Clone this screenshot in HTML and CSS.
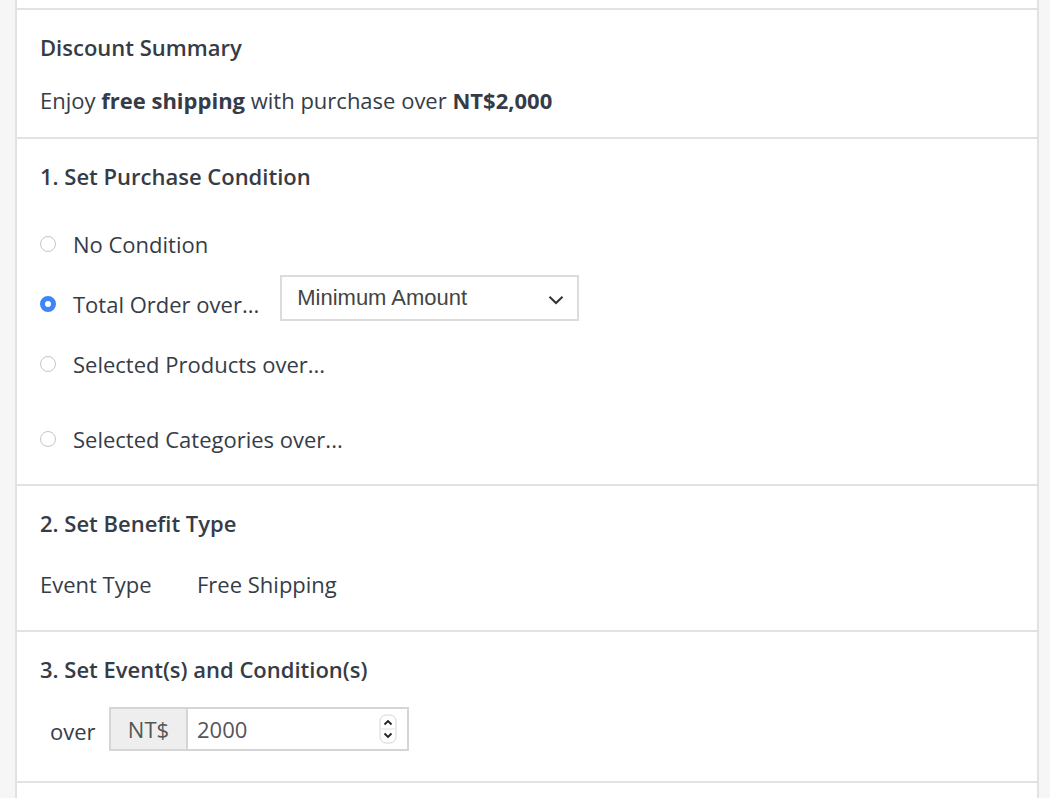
FILE: index.html
```html
<!DOCTYPE html>
<html lang="en">
<head>
<meta charset="utf-8">
<title>Discount</title>
<link rel="stylesheet" href="styles.css">
</head>
<body>
<div class="panel">
  <div class="section top-stub"></div>
  <div class="section">
    <div class="heading">Discount Summary</div>
    <div class="summary">Enjoy <b>free shipping</b> with purchase over <b>NT$2,000</b></div>
  </div>
  <div class="section cond">
    <div class="heading">1. Set Purchase Condition</div>
    <div class="radios">
      <div class="row r1"><span class="radio"></span><span class="label">No Condition</span></div>
      <div class="row r2"><span class="radio checked"></span><span class="label">Total Order over...</span>
        <div class="select"><span>Minimum Amount</span>
          <svg class="chev" width="16" height="10" viewBox="0 0 16 10"><path d="M1.5 1.8 L8 8 L14.5 1.8" fill="none" stroke="#333" stroke-width="2"/></svg>
        </div>
      </div>
      <div class="row r3"><span class="radio"></span><span class="label">Selected Products over...</span></div>
      <div class="row r4"><span class="radio"></span><span class="label">Selected Categories over...</span></div>
    </div>
  </div>
  <div class="section benefit">
    <div class="heading">2. Set Benefit Type</div>
    <div class="kv"><span class="k">Event Type</span><span class="v">Free Shipping</span></div>
  </div>
  <div class="section events">
    <div class="heading">3. Set Event(s) and Condition(s)</div>
    <div class="over-row">
      <span class="over">over</span>
      <div class="group">
        <span class="addon">NT$</span>
        <span class="value">2000</span>
        <svg class="spin" width="18" height="30" viewBox="0 0 18 30">
          <rect x="1" y="1" width="16" height="28" rx="6" fill="#fff" stroke="#d6d6d6"/>
          <line x1="2" y1="15" x2="16" y2="15" stroke="#e2e2e2"/>
          <path d="M5.5 10.5 L9 7 L12.5 10.5" fill="none" stroke="#222" stroke-width="1.8"/>
          <path d="M5.5 19.5 L9 23 L12.5 19.5" fill="none" stroke="#222" stroke-width="1.8"/>
        </svg>
      </div>
    </div>
  </div>
  <div class="section tail"></div>
</div>
</body>
</html>
```

FILE: styles.css
```css
html, body {
  margin: 0;
  padding: 0;
}
body {
  background: #f6f6f6;
  font-family: "Open Sans", "Liberation Sans", sans-serif;
  color: #363c47;
  font-size: 22px;
  height: 798px;
  overflow: hidden;
}
.panel {
  margin: 0 11px 0 15px;
  background: #fff;
  border-left: 2px solid #e2e2e2;
  border-right: 2px solid #e2e2e2;
  min-height: 798px;
}
.section {
  border-bottom: 2px solid #e2e2e2;
  padding: 23px 23px 23px;
}
.top-stub {
  padding: 0;
  height: 8px;
}
.tail {
  border-bottom: none;
  height: 40px;
  padding: 0;
}
.heading {
  font-weight: 600;
  line-height: 28px;
}
.summary {
  margin-top: 25px;
  line-height: 28px;
}
.summary b {
  font-weight: 700;
}
.cond {
  padding-bottom: 31px;
}
.radios {
  margin-top: 40px;
}
.row {
  display: flex;
  align-items: flex-start;
  line-height: 28px;
  height: 28px;
}
.r2 { margin-top: 32px; }
.r3 { margin-top: 32px; }
.r4 { margin-top: 47px; }
.radio {
  width: 16px;
  height: 16px;
  box-sizing: border-box;
  border: 1px solid #c6c6c6;
  border-radius: 50%;
  background: #fff;
  margin: 6px 17px 0 0;
  flex: none;
}
.radio.checked {
  border: 5px solid #3d86f6;
  background: #fff;
}
.select {
  margin: -15px 0 0 21px;
  width: 299px;
  height: 46px;
  box-sizing: border-box;
  border: 2px solid #dcdcdc;
  display: flex;
  align-items: center;
  justify-content: space-between;
  padding: 0 13px 0 15px;
  font-family: "Liberation Sans", Arial, sans-serif;
  color: #444;
  font-size: 22px;
}
.chev {
  margin-top: 4px;
}
.benefit {
  padding-bottom: 32px;
}
.kv {
  margin-top: 33px;
  line-height: 28px;
  display: flex;
}
.kv .k {
  width: 157px;
}
.events {
  padding-bottom: 30px;
}
.over-row {
  margin-top: 24px;
  display: flex;
  align-items: center;
}
.over {
  margin-left: 10px;
  width: 59px;
  padding-top: 4px;
}
.group {
  display: flex;
  align-items: center;
  width: 300px;
  height: 44px;
  box-sizing: border-box;
  border: 2px solid #d5d5d5;
  color: #555;
}
.addon {
  width: 77px;
  height: 100%;
  background: #eeeeee;
  border-right: 2px solid #d5d5d5;
  display: flex;
  align-items: center;
  justify-content: center;
  box-sizing: border-box;
}
.value {
  flex: 1;
  padding-left: 9px;
}
.spin {
  margin-right: 10px;
}
```
